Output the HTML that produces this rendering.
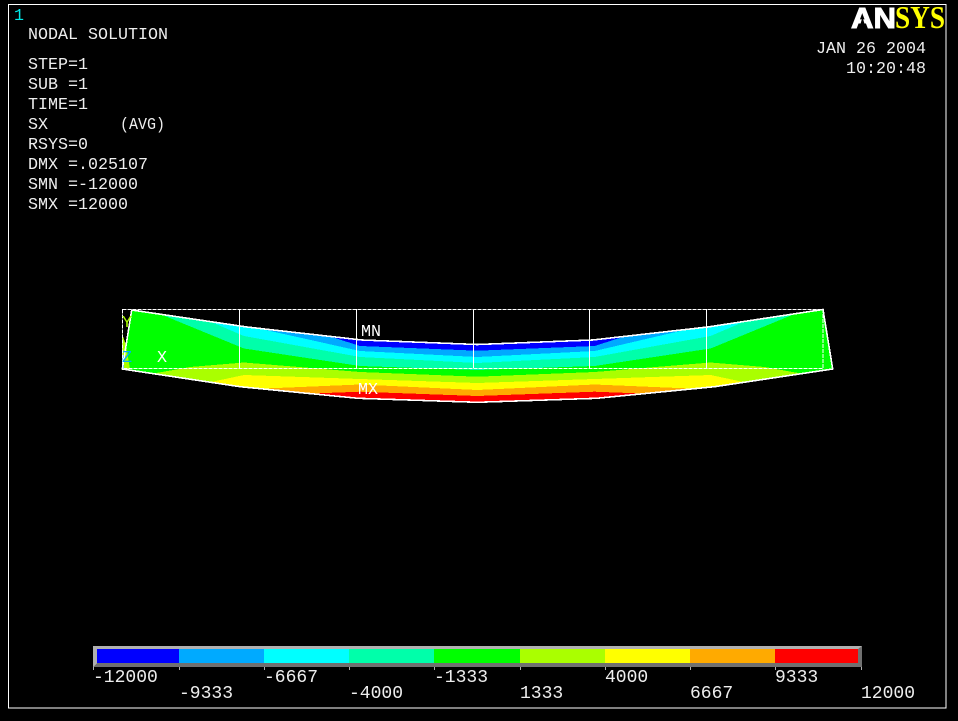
<!DOCTYPE html>
<html>
<head>
<meta charset="utf-8">
<title>ANSYS Nodal Solution</title>
<style>
html,body{margin:0;padding:0;background:#000;width:958px;height:721px;overflow:hidden}
svg{display:block}
text{font-family:"Liberation Mono",monospace;font-size:16.67px;fill:#eee;white-space:pre}
.l{font-size:18px;fill:#eee}
</style>
</head>
<body>
<svg width="958" height="721" viewBox="0 0 958 721" xmlns="http://www.w3.org/2000/svg">
<defs>
<clipPath id="beam"><polygon points="131.7,310 247,327 362,340 477.3,344.5 592.6,340 707.6,327 823,309.5 832.7,369 714.6,386.7 596.6,398.3 477.3,402.3 358,398.3 240,386.7 122.3,369"/></clipPath>
</defs>
<rect width="958" height="721" fill="#000"/>
<rect x="8.5" y="4.5" width="937.5" height="703.5" fill="none" stroke="#fff" stroke-width="1"/>

<text x="14" y="20" style="fill:#00e8e8">1</text>
<text x="28" y="39">NODAL SOLUTION</text>
<text x="28" y="69">STEP=1</text>
<text x="28" y="89">SUB =1</text>
<text x="28" y="109">TIME=1</text>
<text x="28" y="129">SX</text>
<text x="120" y="129" textLength="45" lengthAdjust="spacingAndGlyphs">(AVG)</text>
<text x="28" y="149">RSYS=0</text>
<text x="28" y="169">DMX =.025107</text>
<text x="28" y="189">SMN =-12000</text>
<text x="28" y="209">SMX =12000</text>

<text x="816" y="53">JAN 26 2004</text>
<text x="846" y="73">10:20:48</text>

<text x="851" y="28" textLength="45" lengthAdjust="spacingAndGlyphs" style="font-family:'Liberation Sans',sans-serif;font-weight:bold;font-size:29px;fill:#fff;stroke:#fff;stroke-width:1">AN</text>
<polygon points="859,29 862.5,17 866,29" fill="#000"/>
<text x="895" y="28" textLength="50" lengthAdjust="spacingAndGlyphs" style="font-family:'Liberation Serif',serif;font-weight:bold;font-size:32px;fill:#ffff00">SYS</text>

<g clip-path="url(#beam)" shape-rendering="crispEdges">
<rect x="100" y="300" width="760" height="120" fill="#0000ff"/>
<polygon fill="#00aaff" points="0,300 330,300 330,336.4 360,346 477.3,350.7 594.6,346 624.6,336.4 624.6,300 958,300 958,450 0,450"/>
<polygon fill="#00ffff" points="0,300 260,300 260,328.7 360,351 477.3,357 594.6,351 690,328.7 690,300 958,300 958,450 0,450"/>
<polygon fill="#00ffaa" points="0,300 210,300 210,321.5 244,336 360,357 477.3,363 594.6,357 710.6,336 744.6,321.5 744.6,300 958,300 958,450 0,450"/>
<polygon fill="#00ff00" points="0,300 160,300 160,314 244,348.5 360,366 477.3,370 594.6,366 710.6,348.5 794.6,314 794.6,300 958,300 958,450 0,450"/>
<polygon fill="#aaff00" points="153,450 153,373.6 190,367 244,362.5 360,372 477.3,376.7 594.6,372 710.6,362.5 764.6,367 801.6,373.6 801.6,450"/>
<polygon fill="#ffff00" points="210,450 210,382.2 244,375 360,379 477.3,383 594.6,379 710.6,375 744.6,382.2 744.6,450"/>
<polygon fill="#ffaa00" points="260,450 260,388.7 360,384.5 477.3,390 594.6,384.5 694.6,388.7 694.6,450"/>
<polygon fill="#ff0000" points="310,450 310,393.6 360,391.7 477.3,396 594.6,391.7 644.6,393.6 644.6,450"/>
</g>
<polygon fill="#aaff00" points="122,333 126,345 130,369 122,369" shape-rendering="crispEdges"/>
<rect x="122" y="355" width="2" height="14" fill="#00aaff" shape-rendering="crispEdges"/>

<polyline fill="none" stroke="#fff" stroke-width="1.6" shape-rendering="crispEdges" points="131.7,310 247,327 362,340 477.3,344.5 592.6,340 707.6,327 823,309.5 832.7,369 714.6,386.7 596.6,398.3 477.3,402.3 358,398.3 240,386.7 122.3,369 131.7,310"/>
<rect x="122.5" y="309.5" width="700.5" height="59" fill="none" stroke="#fff" stroke-width="1" stroke-dasharray="4 1" shape-rendering="crispEdges"/>
<g stroke="#fff" stroke-width="1" shape-rendering="crispEdges">
<line x1="239.5" y1="309" x2="239.5" y2="368"/>
<line x1="356.5" y1="309" x2="356.5" y2="368"/>
<line x1="473.5" y1="309" x2="473.5" y2="368"/>
<line x1="589.5" y1="309" x2="589.5" y2="368"/>
<line x1="706.5" y1="309" x2="706.5" y2="368"/>
</g>

<text x="122" y="327" style="fill:#aaff00">Y</text>
<text x="122" y="362" style="fill:#00aaff">Z</text>
<text x="157" y="362" style="fill:#fff">X</text>
<text x="361" y="336" style="fill:#fff">MN</text>
<text x="358" y="394" style="fill:#fff">MX</text>

<g shape-rendering="crispEdges">
<rect x="93" y="646" width="769" height="21" fill="#b0b0b0"/>
<polygon points="93,667 97,663 858,663 858,649 862,646 862,667" fill="#707070"/>
<rect x="97" y="649" width="82" height="14" fill="#0000ff"/>
<rect x="179" y="649" width="85" height="14" fill="#00aaff"/>
<rect x="264" y="649" width="85" height="14" fill="#00ffff"/>
<rect x="349" y="649" width="85" height="14" fill="#00ffaa"/>
<rect x="434" y="649" width="86" height="14" fill="#00ff00"/>
<rect x="520" y="649" width="85" height="14" fill="#aaff00"/>
<rect x="605" y="649" width="85" height="14" fill="#ffff00"/>
<rect x="690" y="649" width="85" height="14" fill="#ffaa00"/>
<rect x="775" y="649" width="83" height="14" fill="#ff0000"/>
<g fill="#b0b0b0">
<rect x="93" y="667" width="1" height="3"/>
<rect x="179" y="667" width="1" height="3"/>
<rect x="264" y="667" width="1" height="3"/>
<rect x="349" y="667" width="1" height="3"/>
<rect x="434" y="667" width="1" height="3"/>
<rect x="520" y="667" width="1" height="3"/>
<rect x="605" y="667" width="1" height="3"/>
<rect x="690" y="667" width="1" height="3"/>
<rect x="775" y="667" width="1" height="3"/>
<rect x="861" y="667" width="1" height="3"/>
</g>
</g>

<text class="l" x="93" y="682">-12000</text>
<text class="l" x="179" y="698">-9333</text>
<text class="l" x="264" y="682">-6667</text>
<text class="l" x="349" y="698">-4000</text>
<text class="l" x="434" y="682">-1333</text>
<text class="l" x="520" y="698">1333</text>
<text class="l" x="605" y="682">4000</text>
<text class="l" x="690" y="698">6667</text>
<text class="l" x="775" y="682">9333</text>
<text class="l" x="861" y="698">12000</text>
</svg>
</body>
</html>
